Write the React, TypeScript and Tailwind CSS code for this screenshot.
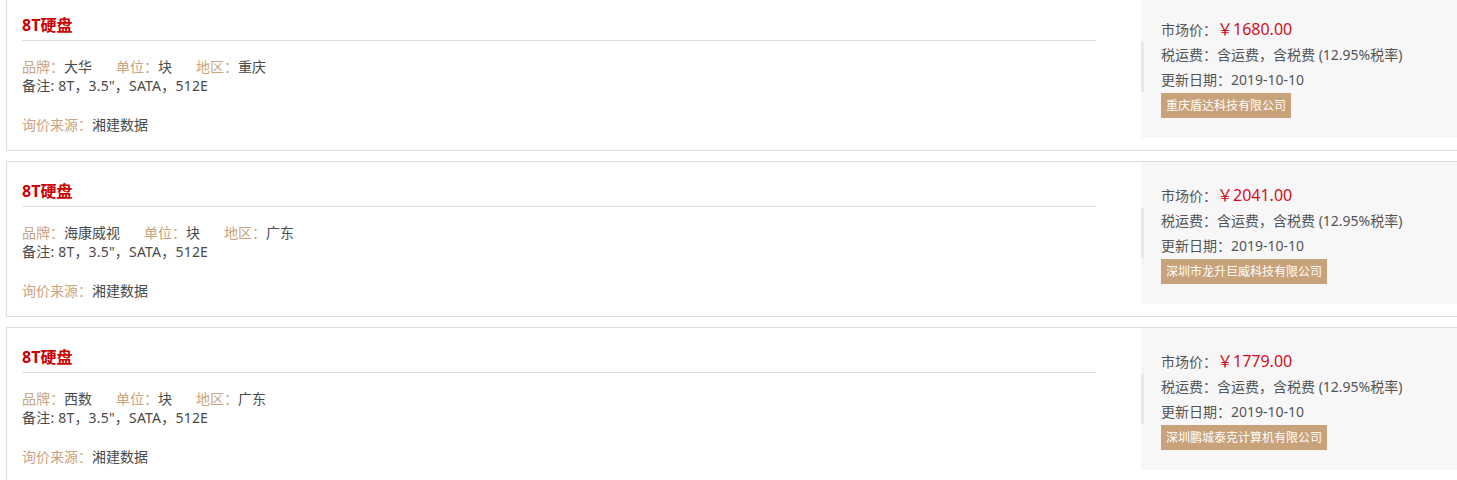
import React from "react";

interface Offer {
    brand: string;
    region: string;
    price: string;
    company: string;
}

const offers: Offer[] = [
    { brand: "大华", region: "重庆", price: "1680.00", company: "重庆盾达科技有限公司" },
    { brand: "海康威视", region: "广东", price: "2041.00", company: "深圳市龙升巨威科技有限公司" },
    { brand: "西数", region: "广东", price: "1779.00", company: "深圳鹏城泰克计算机有限公司" },
];

function OfferCard({ offer }: { offer: Offer }) {
    return (
        <div className="flex h-[156px] w-[1460px] shrink-0 border border-[#dddddd] bg-white mb-[10px]">
            {/* left: product info */}
            <div className="flex-1 pl-[15px] pr-[45px] pt-[18px]">
                <div className="border-b border-[#dddddd] pb-[4px]">
                    <h3 className="h-[22px] text-[16px] font-bold leading-[22px] text-[#cc0000]">
                        8T硬盘
                    </h3>
                </div>
                <div className="mt-[16px] text-[14px] leading-[19px] text-[#4a4a4a]">
                    <div className="flex gap-[24px]">
                        <span>
                            <span className="text-[#c9a47f]">品牌：</span>
                            {offer.brand}
                        </span>
                        <span>
                            <span className="text-[#c9a47f]">单位：</span>块
                        </span>
                        <span>
                            <span className="text-[#c9a47f]">地区：</span>
                            {offer.region}
                        </span>
                    </div>
                    <div className="tracking-[0.2px]">备注: 8T，3.5"，SATA，512E</div>
                    <div className="mt-[20px]">
                        <span className="text-[#c9a47f]">询价来源：</span>湘建数据
                    </div>
                </div>
            </div>

            {/* right: price panel */}
            <div className="relative mb-[12px] w-[324px] bg-[#f7f7f7] pl-[20px] pt-[21px] text-[14px] text-[#555]">
                <div className="absolute left-0 top-[46px] h-[50px] w-[3px] border border-[#e6e6e6] bg-[#eeeeee]" />
                <div className="leading-[25px]">
                    市场价：
                    <span className="text-[16px] text-[#d0101b]">￥{offer.price}</span>
                </div>
                <div className="leading-[25px]">税运费：含运费，含税费 (12.95%税率)</div>
                <div className="leading-[25px]">更新日期：2019-10-10</div>
                <div className="mt-[1px] inline-block h-[25px] bg-[#c7a27b] px-[5px] text-[12px] leading-[25px] text-white">
                    {offer.company}
                </div>
            </div>
        </div>
    );
}

export default function App() {
    return (
        <div
            className="h-[480px] w-full overflow-hidden bg-white"
            style={{ fontFamily: '"Noto Sans", "Noto Sans CJK SC", sans-serif' }}
        >
            <div className="-mt-[5px] pl-[6px]">
                {offers.map((o) => (
                    <OfferCard key={o.company} offer={o} />
                ))}
            </div>
        </div>
    );
}
